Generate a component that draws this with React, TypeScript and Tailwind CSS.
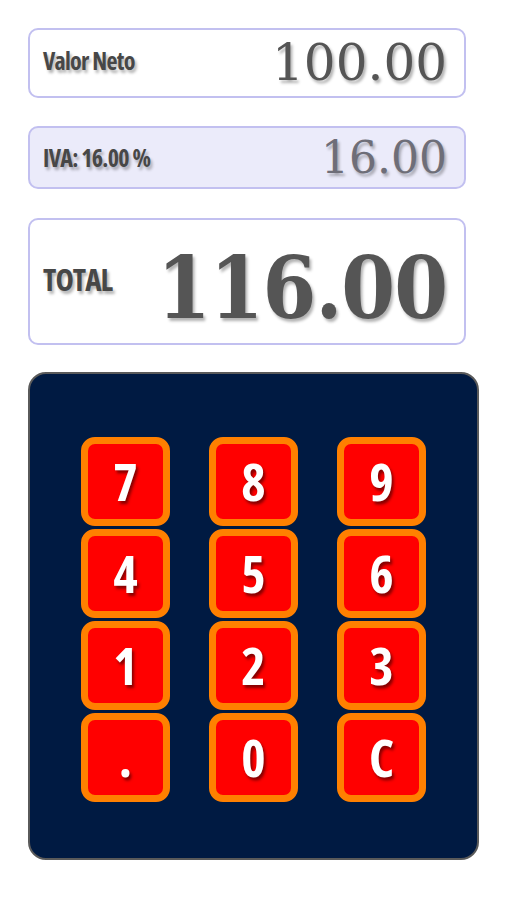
import React from "react";

const keys = ["7", "8", "9", "4", "5", "6", "1", "2", "3", ".", "0", "C"];

const labelFont = "font-['Open_Sans','DejaVu_Sans_Condensed',sans-serif] font-stretch-condensed";
const numFont = "font-['DejaVu_Serif','Liberation_Serif',serif]";
const shadow = "[text-shadow:2px_3px_3px_rgba(0,0,0,0.3)]";

function Card({
  label,
  value,
  className,
  labelClass,
  valueClass,
}: {
  label: string;
  value: string;
  className: string;
  labelClass: string;
  valueClass: string;
}) {
  return (
    <div
      className={`flex items-center justify-between rounded-[10px] border-2 border-[#c2c0f0] pl-[13px] pr-[17px] ${className}`}
    >
      <span className={`${labelFont} font-bold tracking-[-0.03em] text-[#474747] ${shadow} ${labelClass}`}>
        {label}
      </span>
      <span className={`${numFont} ${shadow} ${valueClass}`}>{value}</span>
    </div>
  );
}

export default function App() {
  return (
    <div className="min-h-[900px] w-[507px] bg-white pl-[28px] pt-[28px]">
      <div className="flex w-[438px] flex-col">
        <Card
          label="Valor Neto"
          value="100.00"
          className="h-[70px] bg-white"
          labelClass="text-[24px] mt-[-4px]"
          valueClass="text-[50px] leading-none text-[#555555]"
        />
        <Card
          label="IVA: 16.00 %"
          value="16.00"
          className="mt-[28px] h-[63px] bg-[#ebebfa]"
          labelClass="text-[24px]"
          valueClass="text-[44px] leading-none text-[#6e6e78]"
        />
        <Card
          label="TOTAL"
          value="116.00"
          className="mt-[29px] h-[127px] bg-white"
          labelClass="text-[31px] mt-[-4px]"
          valueClass="text-[86px] leading-none font-bold text-[#555555] tracking-[-1px] mt-[12px] font-stretch-condensed"
        />
      </div>
      <div className="mt-[27px] flex h-[488px] w-[451px] items-center justify-center rounded-[18px] border-2 border-[#5a5a5a] bg-[#001a42] pt-[6px]">
        <div className="grid grid-cols-[89px_89px_89px] gap-x-[39px] gap-y-[3px]">
          {keys.map((k) => (
            <button
              key={k}
              className="flex h-[89px] w-[89px] items-center justify-center rounded-[14px] border-[7px] border-[#ff8000] bg-[#ff0000] font-['Open_Sans',sans-serif] text-[52px] font-bold leading-none text-white font-stretch-semi-condensed [text-shadow:2px_3px_3px_rgba(120,0,0,0.9)]"
            >
              {k}
            </button>
          ))}
        </div>
      </div>
    </div>
  );
}
